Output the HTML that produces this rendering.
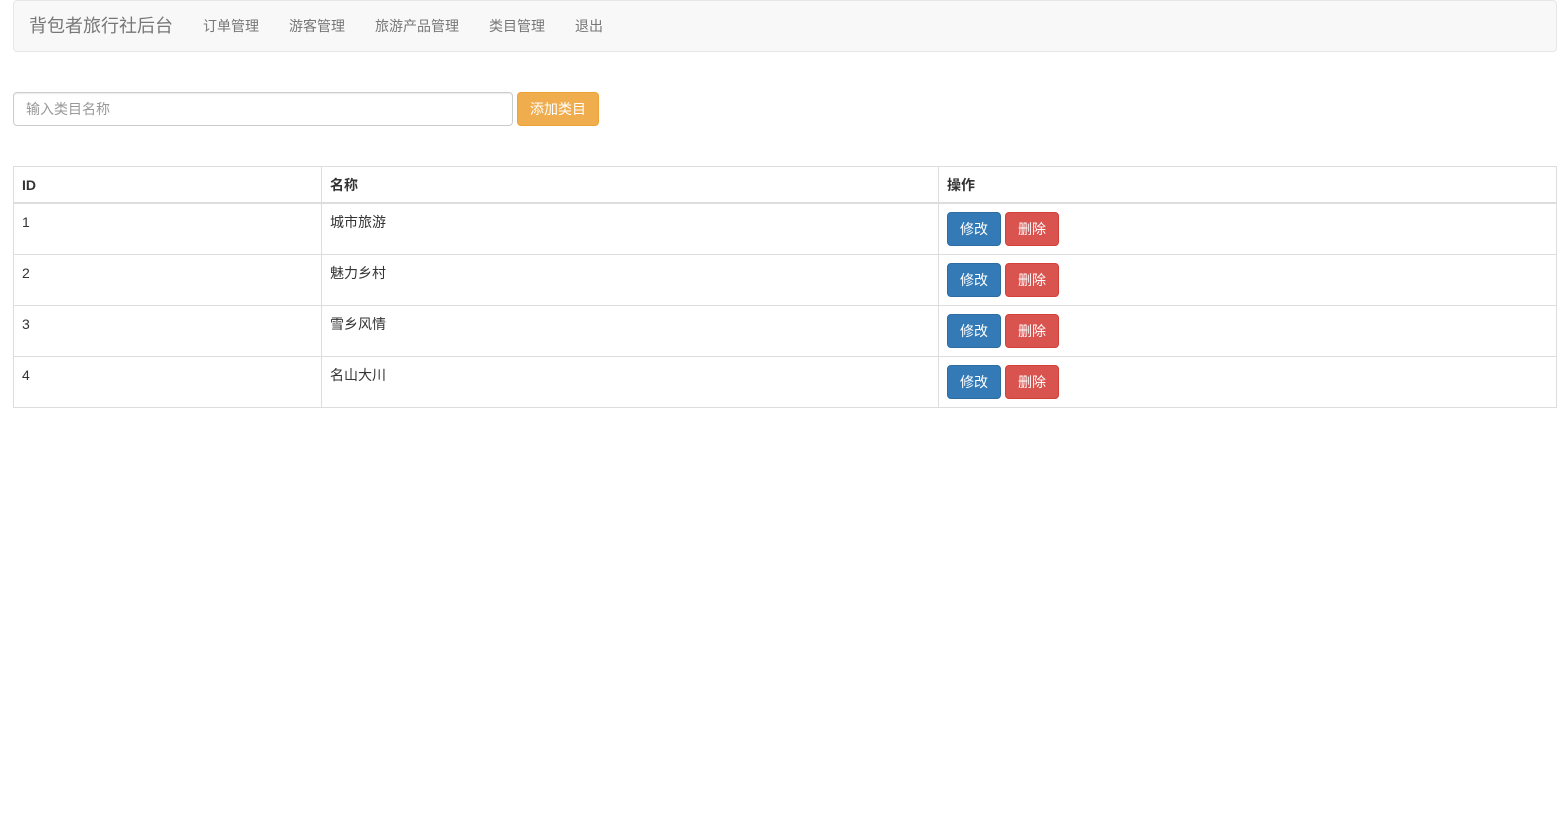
<!DOCTYPE html>
<html><head><meta charset="utf-8"><style>
*{box-sizing:border-box;margin:0;padding:0}
body{width:1559px;height:827px;background:#fff;font-family:"Liberation Sans","Noto Sans CJK SC",sans-serif;font-size:14px;color:#333;position:relative}
.nav{position:absolute;left:13px;top:0;width:1544px;height:52px;background:#f8f8f8;border:1px solid #e7e7e7;border-radius:4px}
.brand{position:absolute;left:15px;top:13px;font-size:18px;color:#777;line-height:24px}
.nav a{position:absolute;top:15px;font-size:14px;color:#777;line-height:20px;text-decoration:none}
.inp{position:absolute;left:13px;top:92px;width:500px;height:34px;border:1px solid #ccc;border-radius:4px;padding:6px 12px;color:#999;line-height:20px;box-shadow:inset 0 1px 1px rgba(0,0,0,.075)}
.add{position:absolute;left:517px;top:92px;width:82px;height:34px;background:#f0ad4e;border:1px solid #eea236;border-radius:4px;color:#fff;text-align:center;line-height:32px}
table{position:absolute;left:13px;top:166px;width:1544px;border-collapse:collapse}
td,th{border:1px solid #ddd;padding:8px;vertical-align:top;text-align:left;line-height:20px}
th{height:36px;padding-bottom:7px;font-weight:bold;border-bottom-width:2px}
td{height:51px}
.b{display:inline-block;width:54px;height:34px;border-radius:4px;color:#fff;text-align:center;line-height:32px;margin-right:4px;vertical-align:top}
.e{background:#337ab7;border:1px solid #2e6da4}.d{background:#d9534f;border:1px solid #d43f3a}
</style></head><body>
<div class="nav"><span class="brand">背包者旅行社后台</span>
<a style="left:189px">订单管理</a><a style="left:275px">游客管理</a><a style="left:361px">旅游产品管理</a><a style="left:475px">类目管理</a><a style="left:561px">退出</a></div>
<div class="inp">输入类目名称</div><div class="add">添加类目</div>
<table><tr><th style="width:308px">ID</th><th style="width:617px">名称</th><th>操作</th></tr>
<tr><td>1</td><td>城市旅游</td><td><span class="b e">修改</span><span class="b d">删除</span></td></tr>
<tr><td>2</td><td>魅力乡村</td><td><span class="b e">修改</span><span class="b d">删除</span></td></tr>
<tr><td>3</td><td>雪乡风情</td><td><span class="b e">修改</span><span class="b d">删除</span></td></tr>
<tr><td>4</td><td>名山大川</td><td><span class="b e">修改</span><span class="b d">删除</span></td></tr>
</table></body></html>
